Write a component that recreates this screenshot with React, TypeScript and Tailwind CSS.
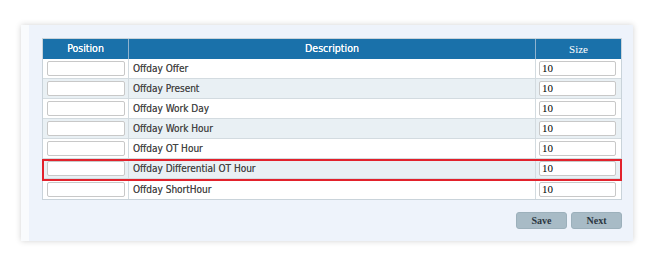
import React from "react";

const rows = [
  "Offday Offer",
  "Offday Present",
  "Offday Work Day",
  "Offday Work Hour",
  "Offday OT Hour",
  "Offday Differential OT Hour",
  "Offday ShortHour",
];

const narrow = "font-['Liberation_Sans_Narrow','DejaVu_Sans_Condensed',sans-serif]";
const serif = "font-['Liberation_Serif','Times_New_Roman',serif]";

export default function App() {
  return (
    <div className="min-h-screen bg-white pl-[21px] pt-[25px]">
      <div className="flex h-[216px] w-[612px] bg-[#eef3fb] shadow-[0_0_6px_rgba(0,0,0,0.18)]">
        <div className="w-[8px] bg-[#f9fbfd]" />
        <div className="flex-1 pl-[13px] pt-[13px]">
          {/* Mapping table */}
          <div className="w-[580px] border border-[#c9d3da] bg-white">
            <div className="flex h-[20px] bg-[#1a71aa] text-white">
              <div
                className={`flex w-[86px] items-center justify-center border-r border-[#8fb3cf] text-[10.5px] [text-shadow:0_0_0.5px_#fff] ${narrow}`}
              >
                Position
              </div>
              <div
                className={`flex w-[407px] items-center justify-center border-r border-[#8fb3cf] text-[10.5px] [text-shadow:0_0_0.5px_#fff] ${narrow}`}
              >
                Description
              </div>
              <div className={`flex flex-1 items-center justify-center text-[11px] ${serif}`}>Size</div>
            </div>
            {rows.map((label, i) => (
              <div
                key={label}
                className={`relative flex h-[20px] border-b border-[#d3dbe0] last:border-b-0 ${
                  i % 2 === 1 ? "bg-[#e9f0f4]" : "bg-white"
                }`}
              >
                <div className="flex w-[86px] items-center border-r border-[#d3dbe0] pl-[4px]">
                  <input
                    type="text"
                    className="h-[15px] w-[78px] rounded-[2px] border border-[#c8c8c8] bg-white outline-none"
                  />
                </div>
                <div
                  className={`flex w-[407px] items-center border-r border-[#d3dbe0] pl-[4px] text-[10px] text-[#444] [text-shadow:0_0_0.3px_#777] ${narrow}`}
                >
                  {label}
                </div>
                <div className="flex flex-1 items-center pl-[3px]">
                  <input
                    type="text"
                    defaultValue="10"
                    className={`h-[15px] w-[77px] rounded-[2px] border border-[#c8c8c8] bg-white px-[2px] text-[11px] text-black outline-none ${serif}`}
                  />
                </div>
                {i === 5 && (
                  <div className="pointer-events-none absolute left-[-1px] top-0 z-10 h-[22px] w-[580px] border-2 border-[#e2222c]" />
                )}
              </div>
            ))}
          </div>

          {/* Actions */}
          <div className="mt-[12px] flex w-[580px] justify-end gap-[4px]">
            <button
              className={`h-[17px] w-[51px] rounded-[3px] border border-[#9cb0bb] bg-[#a8bbc6] text-[10px] font-bold text-[#2b3640] ${serif}`}
            >
              Save
            </button>
            <button
              className={`h-[17px] w-[51px] rounded-[3px] border border-[#9cb0bb] bg-[#a8bbc6] text-[10px] font-bold text-[#2b3640] ${serif}`}
            >
              Next
            </button>
          </div>
        </div>
      </div>
    </div>
  );
}
